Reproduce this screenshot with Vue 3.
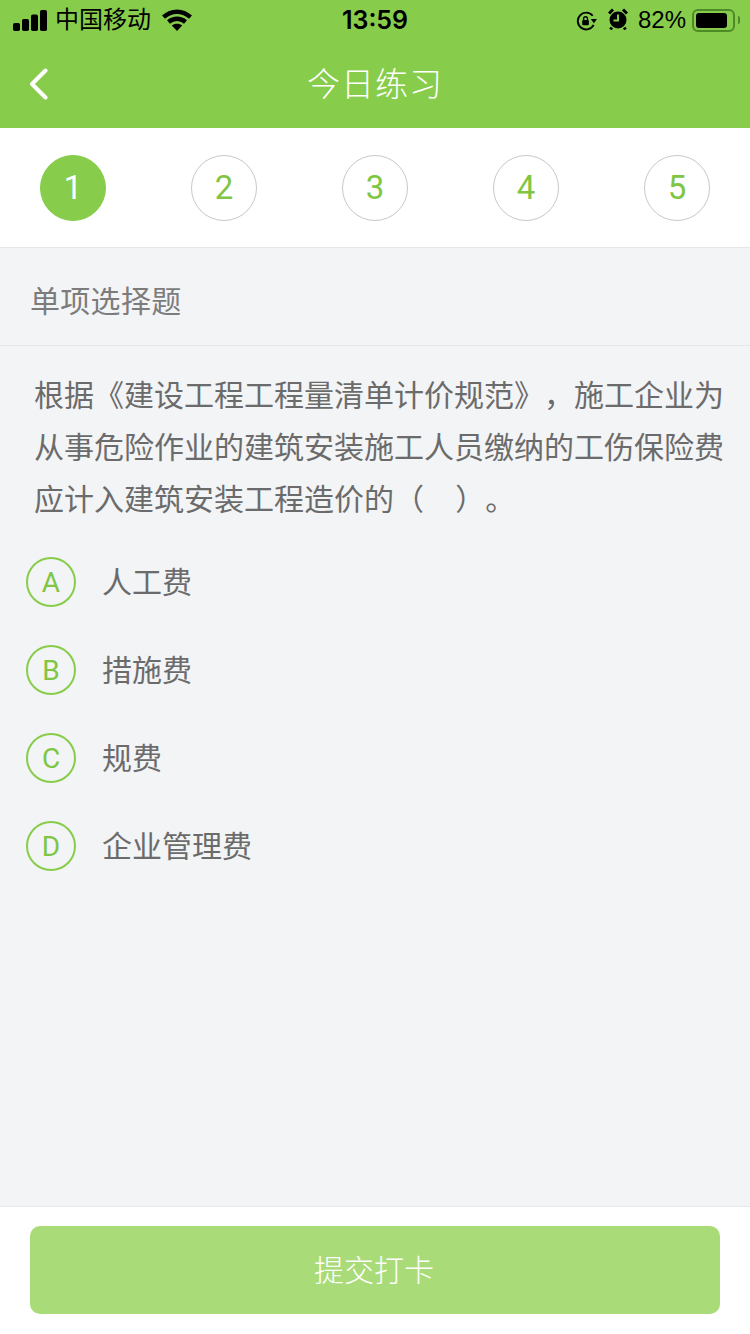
<script setup>
const steps = [1, 2, 3, 4, 5]
const lines = [
  '根据《建设工程工程量清单计价规范》，施工企业为',
  '从事危险作业的建筑安装施工人员缴纳的工伤保险费',
  '应计入建筑安装工程造价的（    ）。',
]
const options = [
  { key: 'A', text: '人工费' },
  { key: 'B', text: '措施费' },
  { key: 'C', text: '规费' },
  { key: 'D', text: '企业管理费' },
]
</script>

<template>
  <div class="page">
    <div class="head">
      <div class="status">
        <div class="status-left">
          <svg class="signal" width="34" height="21" viewBox="0 0 34 21">
            <rect x="0" y="13" width="7" height="8" rx="1.800" />
            <rect x="9" y="9" width="7" height="12" rx="1.800" />
            <rect x="18" y="4.500" width="7" height="16.500" rx="1.800" />
            <rect x="27" y="0" width="7" height="21" rx="1.800" />
          </svg>
          <span class="carrier">中国移动</span>
          <svg class="wifi" width="30" height="22" viewBox="0 0 30 22">
            <path d="M1.500 8.200C9.500 .9 20.500 .9 28.500 8.200" />
            <path d="M6.500 13c5-4.300 12-4.300 17 0" />
            <path d="M15 22l-5.200-5.400c2.800-2.500 7.600-2.500 10.400 0z" class="wifi-fill" />
          </svg>
        </div>
        <span class="time">13:59</span>
        <div class="status-right">
          <svg width="21" height="20" viewBox="0 0 22 21" class="lock">
            <path d="M18.500 14.500A8.800 8.800 0 1 1 17.500 5" />
            <path d="M15.500 8.500h6.500l-3.200 4.300z" class="solid" />
            <rect x="6.500" y="9.500" width="7" height="5.500" rx="1" class="solid" />
            <path d="M8 9.500V8a2 2 0 0 1 4 0v1.500" class="thin" />
          </svg>
          <svg width="20" height="22" viewBox="0 0 20 22" class="alarm">
            <circle cx="10" cy="12" r="8.500" class="solid" />
            <path d="M1 5.500 5 1.500 M19 5.500 15 1.500" class="ears" />
            <path d="M3.800 19.500 2.500 21.500 M16.200 19.500 17.500 21.500" class="ears" />
            <path d="M10 6.500v6H5.500" class="hands" />
          </svg>
          <span class="percent">82%</span>
          <div class="battery"><div class="battery-level" /></div>
          <div class="battery-cap" />
        </div>
      </div>
      <div class="nav">
        <svg class="back" width="20" height="32" viewBox="0 0 20 32">
          <path d="M16.500 2.500 3 16l13.500 13.500" />
        </svg>
        <span class="title">今日练习</span>
      </div>
    </div>

    <div class="steps">
      <div v-for="n in steps" :key="n" class="step" :class="{ active: n === 1 }">{{ n }}</div>
    </div>

    <div class="type">单项选择题</div>

    <div class="question">
      <div v-for="line in lines" :key="line">{{ line }}</div>
    </div>

    <div class="options">
      <div v-for="opt in options" :key="opt.key" class="option">
        <div class="letter">{{ opt.key }}</div>
        <span class="option-text">{{ opt.text }}</span>
      </div>
    </div>

    <div class="spacer" />

    <div class="footer">
      <div class="submit">提交打卡</div>
    </div>
  </div>
</template>

<style scoped>
.page {
  width: 750px;
  height: 1334px;
  display: flex;
  flex-direction: column;
  background: #f3f4f6;
  font-family: "Liberation Sans", "Noto Sans CJK SC", sans-serif;
  text-spacing-trim: space-all;
  overflow: hidden;
}
.head {
  background: #87cd4b;
  height: 128px;
}
.status {
  height: 40px;
  display: flex;
  align-items: center;
  justify-content: space-between;
  padding: 0 10px 0 13px;
  color: #000;
  position: relative;
}
.status-left {
  display: flex;
  align-items: center;
}
.signal {
  fill: #000;
}
.carrier {
  font-size: 24px;
  margin-left: 8px;
  line-height: 40px;
}
.wifi {
  margin-left: 11px;
  margin-top: -1px;
  fill: none;
  stroke: #000;
  stroke-width: 4.500;
}
.wifi-fill {
  fill: #000;
  stroke: none;
}
.time {
  position: absolute;
  left: 0;
  right: 0;
  text-align: center;
  font-family: Inter, "Liberation Sans", sans-serif;
  font-size: 25px;
  font-weight: 600;
  line-height: 40px;
}
.status-right {
  display: flex;
  align-items: center;
  position: relative;
  z-index: 1;
}
.lock {
  fill: none;
  stroke: #000;
  stroke-width: 2;
  margin-top: 2px;
}
.lock .solid {
  fill: #000;
  stroke: none;
}
.lock .thin {
  stroke-width: 1.500;
}
.alarm {
  margin-left: 11px;
  margin-top: -2px;
  fill: none;
  stroke: #000;
}
.alarm .solid {
  fill: #000;
  stroke: none;
}
.alarm .ears {
  stroke-width: 3;
}
.alarm .hands {
  stroke: #87cd4b;
  stroke-width: 2;
}
.percent {
  font-size: 24px;
  margin-left: 10px;
  line-height: 40px;
}
.battery {
  width: 43px;
  height: 23px;
  margin-left: 6px;
  padding: 2px;
  box-sizing: border-box;
  border: 2px solid #4e8a28;
  border-radius: 6px;
}
.battery-level {
  width: 31px;
  height: 100%;
  background: #000;
  border-radius: 3px;
}
.battery-cap {
  width: 2px;
  height: 8px;
  margin-left: 3px;
  background: #4e8a28;
  border-radius: 0 2px 2px 0;
}
.nav {
  height: 88px;
  padding-bottom: 4px;
  box-sizing: border-box;
  position: relative;
  display: flex;
  align-items: center;
  justify-content: center;
}
.back {
  position: absolute;
  left: 29px;
  top: 28px;
  fill: none;
  stroke: #fff;
  stroke-width: 4;
  stroke-linecap: round;
  stroke-linejoin: round;
}
.title {
  font-size: 33px;
  font-weight: 300;
  color: #fff;
  letter-spacing: 1px;
}
.steps {
  height: 119px;
  background: #fff;
  display: flex;
  align-items: center;
  justify-content: space-between;
  padding: 0 40px;
  border-bottom: 1px solid #e6e6e6;
  box-sizing: content-box;
}
.step {
  width: 66px;
  height: 66px;
  box-sizing: border-box;
  border: 1px solid #c8c8c8;
  border-radius: 50%;
  display: flex;
  align-items: center;
  justify-content: center;
  font-family: Roboto, "Liberation Sans", sans-serif;
  font-size: 33px;
  color: #80c644;
}
.step.active {
  background: #87cd4b;
  border-color: #87cd4b;
  color: #fff;
}
.type {
  height: 97px;
  line-height: 107px;
  padding-left: 30px;
  font-size: 30px;
  letter-spacing: .3px;
  color: #7c7c7c;
  border-bottom: 1px solid #e6e7e9;
}
.question {
  padding: 24px 0 0 34px;
  font-size: 30px;
  line-height: 52px;
  color: #6b6b6b;
  white-space: pre;
  word-spacing: -.5px;
}
.options {
  margin-top: 12px;
  padding-left: 26px;
}
.option {
  height: 88px;
  display: flex;
  align-items: center;
  font-size: 30px;
  color: #6b6b6b;
}
.option-text {
  margin-top: -4px;
}
.letter {
  width: 50px;
  height: 50px;
  box-sizing: border-box;
  border: 2px solid #87cd4b;
  border-radius: 50%;
  display: flex;
  align-items: center;
  justify-content: center;
  font-family: Roboto, "Liberation Sans", sans-serif;
  font-size: 28px;
  color: #80c644;
  margin-right: 26px;
  padding-top: 1px;
}
.spacer {
  flex: 1;
}
.footer {
  height: 128px;
  background: #fff;
  border-top: 1px solid #e8e9eb;
  padding: 19px 30px 0;
  box-sizing: border-box;
}
.submit {
  height: 88px;
  padding: 0 2px 4px 0;
  box-sizing: border-box;
  background: #a9dc79;
  border-radius: 10px;
  display: flex;
  align-items: center;
  justify-content: center;
  font-size: 30px;
  font-weight: 300;
  color: #fff;
}
</style>
